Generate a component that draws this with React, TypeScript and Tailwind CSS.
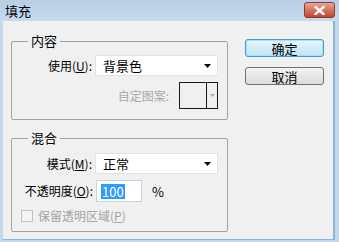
const font = { fontFamily: '"Noto Sans CJK SC", "Liberation Sans", sans-serif' };

function Caret() {
  return (
    <svg width="7" height="4" viewBox="0 0 7 4">
      <path d="M0 0h7L3.5 4z" fill="#000" />
    </svg>
  );
}

function Select({ value }: { value: string }) {
  return (
    <div className="flex h-[21px] w-[123px] items-center justify-between border border-[#e3e3e3] bg-white pl-[7px] pr-[6px]">
      <span className="text-[13px] leading-none text-black">{value}</span>
      <Caret />
    </div>
  );
}

function Group({ title, children, className }: { title: string; children: React.ReactNode; className: string }) {
  return (
    <div className={`relative w-[217px] rounded-[2px] border border-[#a3a3a3] ${className}`}>
      <span className="absolute -top-[9px] left-[16px] bg-[#f0f0f0] px-[3px] text-[13px] leading-[16px] text-black">
        {title}
      </span>
      {children}
    </div>
  );
}

export default function App() {
  return (
    <div className="flex h-[242px] w-[339px] flex-col overflow-hidden bg-[#c5d9ee] text-[12px]" style={font}>
      <div className="flex h-[21px] items-center justify-between bg-gradient-to-b from-[#b7cee6] to-[#c6d9ee] pl-[5px] pr-[4px]">
        <span className="text-[13px] leading-none text-black">填充</span>
        <div className="mt-[2px] flex h-[16px] w-[31px] items-center justify-center self-start rounded-[3px] border border-[#8a3a2e] bg-gradient-to-b from-[#e6a796] via-[#d4735e] to-[#c2452f]">
          <svg width="11" height="9" viewBox="0 0 11 9">
            <path d="M1.5 1l8 7M9.5 1l-8 7" stroke="#fff" strokeWidth="2.4" strokeLinecap="square" />
          </svg>
        </div>
      </div>
      <div className="mb-[2px] ml-[3px] mr-[4px] flex flex-1 gap-[17px] border-r-2 border-b border-[#8cb4da] bg-[#f0f0f0] pl-[8px] pt-[20px]">
        <div className="flex flex-col gap-[18px]">
          <Group title="内容" className="h-[79px]">
            <div className="flex flex-col gap-[6px] pt-[13px] pr-[9px]">
              <div className="flex items-center justify-end gap-[3px]">
                <span className="whitespace-nowrap text-[12px] leading-none text-black">
                  使用(<span className="underline">U</span>):
                </span>
                <Select value="背景色" />
              </div>
              <div className="flex items-center justify-end gap-[10px]">
                <span className="whitespace-nowrap text-[12px] leading-none text-[#a9a9a9]">自定图案:</span>
                <div className="flex h-[27px] w-[39px] border border-[#1a1a1a] bg-[#f0f0f0]">
                  <div className="flex-1 border-r border-[#1a1a1a]" />
                  <div className="flex w-[10px] items-center justify-center">
                    <svg width="5" height="3" viewBox="0 0 5 3">
                      <path d="M0 0h5L2.5 3z" fill="#b0b0b0" />
                    </svg>
                  </div>
                </div>
              </div>
            </div>
          </Group>
          <Group title="混合" className="h-[94px]">
            <div className="flex flex-col pt-[14px] pl-[9px] pr-[9px]">
              <div className="flex items-center justify-end gap-[3px]">
                <span className="whitespace-nowrap text-[12px] leading-none text-black">
                  模式(<span className="underline">M</span>):
                </span>
                <Select value="正常" />
              </div>
              <div className="mt-[6px] flex items-center">
                <span className="w-[72px] whitespace-nowrap text-right text-[12px] leading-none text-black">
                  不透明度(<span className="underline">O</span>):
                </span>
                <div className="ml-[3px] flex h-[22px] w-[46px] items-center border border-[#c5d5e6] bg-white pl-[4px]">
                  <span className="bg-[#3399ff] px-[1px] text-[13px] leading-[15px] text-white">100</span>
                </div>
                <span className="ml-[10px] text-[13px] leading-none text-black">%</span>
              </div>
              <div className="mt-[8px] flex items-center gap-[5px]">
                <div className="h-[12px] w-[12px] border border-[#c2c2c2] bg-[#f4f4f4]" />
                <span className="whitespace-nowrap text-[12px] leading-none text-[#a4a4a4]">
                  保留透明区域(<span className="underline">P</span>)
                </span>
              </div>
            </div>
          </Group>
        </div>
        <div className="-mt-[2px] flex flex-col gap-[10px]">
          <button className="flex h-[18px] w-[79px] items-center justify-center rounded-[3px] border border-[#3c9fce] bg-gradient-to-b from-[#eaf6fd] to-[#bfe3f5] text-[13px] leading-none text-black shadow-[inset_0_0_0_1px_#a9e1f9]">
            确定
          </button>
          <button className="flex h-[18px] w-[79px] items-center justify-center rounded-[3px] border border-[#707070] bg-gradient-to-b from-[#f3f3f3] to-[#dcdcdc] text-[13px] leading-none text-black">
            取消
          </button>
        </div>
      </div>
    </div>
  );
}
